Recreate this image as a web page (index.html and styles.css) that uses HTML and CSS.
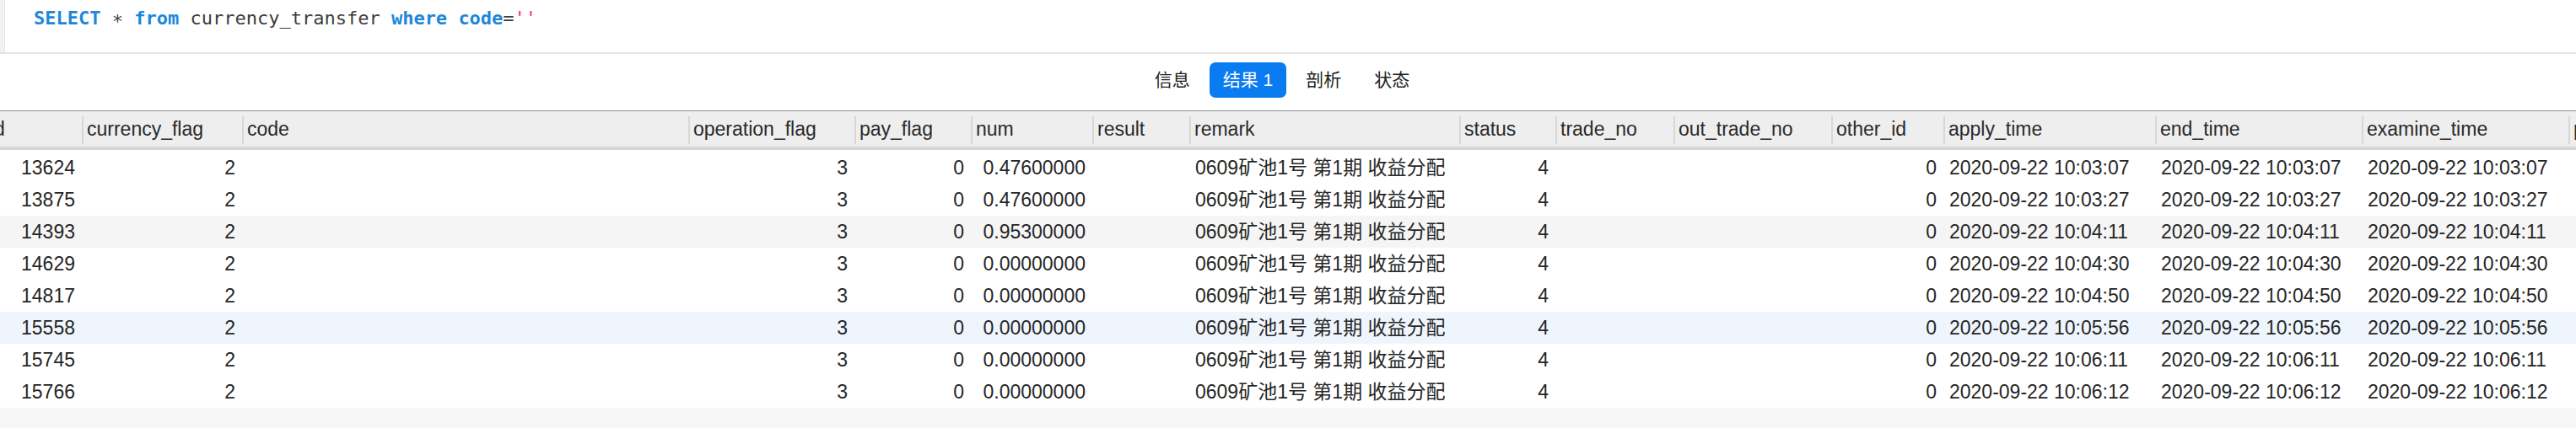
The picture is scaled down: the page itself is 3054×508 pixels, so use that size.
FILE: index.html
```html
<!DOCTYPE html>
<html lang="zh">
<head>
<meta charset="utf-8">
<title>currency_transfer</title>
<link rel="stylesheet" href="styles.css">
</head>
<body>
<div class="editor">
  <div class="gutter"></div>
  <pre class="sql"><span class="kw">SELECT</span> <span class="op">*</span> <span class="kw">from</span> currency_transfer <span class="kw">where</span> <span class="kw">code</span>=<span class="str">''</span></pre>
</div>
<nav class="tabs">
  <span class="tab">信息</span>
  <span class="tab active">结果 1</span>
  <span class="tab">剖析</span>
  <span class="tab">状态</span>
</nav>
<div class="table">
  <div class="thead">
    <div class="th first">id</div>
    <div class="th">currency_flag</div>
    <div class="th">code</div>
    <div class="th">operation_flag</div>
    <div class="th">pay_flag</div>
    <div class="th">num</div>
    <div class="th">result</div>
    <div class="th">remark</div>
    <div class="th">status</div>
    <div class="th">trade_no</div>
    <div class="th">out_trade_no</div>
    <div class="th">other_id</div>
    <div class="th">apply_time</div>
    <div class="th">end_time</div>
    <div class="th">examine_time</div>
    <div class="th">pay_time</div>
  </div>
  <div class="tbody">
    <div class="tr">
      <div class="td r">13624</div><div class="td r">2</div><div class="td"></div><div class="td r">3</div><div class="td r">0</div><div class="td r">0.47600000</div><div class="td"></div><div class="td">0609矿池1号 第1期 收益分配</div><div class="td r">4</div><div class="td"></div><div class="td"></div><div class="td r">0</div><div class="td">2020-09-22 10:03:07</div><div class="td">2020-09-22 10:03:07</div><div class="td">2020-09-22 10:03:07</div><div class="td"></div>
    </div>
    <div class="tr">
      <div class="td r">13875</div><div class="td r">2</div><div class="td"></div><div class="td r">3</div><div class="td r">0</div><div class="td r">0.47600000</div><div class="td"></div><div class="td">0609矿池1号 第1期 收益分配</div><div class="td r">4</div><div class="td"></div><div class="td"></div><div class="td r">0</div><div class="td">2020-09-22 10:03:27</div><div class="td">2020-09-22 10:03:27</div><div class="td">2020-09-22 10:03:27</div><div class="td"></div>
    </div>
    <div class="tr alt">
      <div class="td r">14393</div><div class="td r">2</div><div class="td"></div><div class="td r">3</div><div class="td r">0</div><div class="td r">0.95300000</div><div class="td"></div><div class="td">0609矿池1号 第1期 收益分配</div><div class="td r">4</div><div class="td"></div><div class="td"></div><div class="td r">0</div><div class="td">2020-09-22 10:04:11</div><div class="td">2020-09-22 10:04:11</div><div class="td">2020-09-22 10:04:11</div><div class="td"></div>
    </div>
    <div class="tr">
      <div class="td r">14629</div><div class="td r">2</div><div class="td"></div><div class="td r">3</div><div class="td r">0</div><div class="td r">0.00000000</div><div class="td"></div><div class="td">0609矿池1号 第1期 收益分配</div><div class="td r">4</div><div class="td"></div><div class="td"></div><div class="td r">0</div><div class="td">2020-09-22 10:04:30</div><div class="td">2020-09-22 10:04:30</div><div class="td">2020-09-22 10:04:30</div><div class="td"></div>
    </div>
    <div class="tr">
      <div class="td r">14817</div><div class="td r">2</div><div class="td"></div><div class="td r">3</div><div class="td r">0</div><div class="td r">0.00000000</div><div class="td"></div><div class="td">0609矿池1号 第1期 收益分配</div><div class="td r">4</div><div class="td"></div><div class="td"></div><div class="td r">0</div><div class="td">2020-09-22 10:04:50</div><div class="td">2020-09-22 10:04:50</div><div class="td">2020-09-22 10:04:50</div><div class="td"></div>
    </div>
    <div class="tr sel">
      <div class="td r">15558</div><div class="td r">2</div><div class="td"></div><div class="td r">3</div><div class="td r">0</div><div class="td r">0.00000000</div><div class="td"></div><div class="td">0609矿池1号 第1期 收益分配</div><div class="td r">4</div><div class="td"></div><div class="td"></div><div class="td r">0</div><div class="td">2020-09-22 10:05:56</div><div class="td">2020-09-22 10:05:56</div><div class="td">2020-09-22 10:05:56</div><div class="td"></div>
    </div>
    <div class="tr">
      <div class="td r">15745</div><div class="td r">2</div><div class="td"></div><div class="td r">3</div><div class="td r">0</div><div class="td r">0.00000000</div><div class="td"></div><div class="td">0609矿池1号 第1期 收益分配</div><div class="td r">4</div><div class="td"></div><div class="td"></div><div class="td r">0</div><div class="td">2020-09-22 10:06:11</div><div class="td">2020-09-22 10:06:11</div><div class="td">2020-09-22 10:06:11</div><div class="td"></div>
    </div>
    <div class="tr">
      <div class="td r">15766</div><div class="td r">2</div><div class="td"></div><div class="td r">3</div><div class="td r">0</div><div class="td r">0.00000000</div><div class="td"></div><div class="td">0609矿池1号 第1期 收益分配</div><div class="td r">4</div><div class="td"></div><div class="td"></div><div class="td r">0</div><div class="td">2020-09-22 10:06:12</div><div class="td">2020-09-22 10:06:12</div><div class="td">2020-09-22 10:06:12</div><div class="td"></div>
    </div>
  </div>
</div>
</body>
</html>
```

FILE: styles.css
```css
html, body {
  margin: 0;
  padding: 0;
}

body {
  width: 3054px;
  height: 508px;
  overflow: hidden;
  background: #f6f6f6;
  font-family: "Liberation Sans", "Noto Sans CJK SC", sans-serif;
  color: #262626;
}

/* SQL editor */
.editor {
  display: flex;
  height: 62px;
  background: #ffffff;
  border-bottom: 2px solid #e4e4e4;
}

.gutter {
  width: 5px;
  background: #f2f2f2;
  border-right: 1px solid #e6e6e6;
}

.sql {
  margin: 0;
  padding: 7px 0 0 34px;
  font-family: "DejaVu Sans Mono", "Liberation Mono", monospace;
  font-size: 22px;
  line-height: 30px;
  color: #3d3d3d;
}

.sql .kw {
  color: #1d87d9;
  font-weight: bold;
}

.sql .op {
  vertical-align: -0.2em;
  line-height: 0;
}

.sql .str {
  color: #e5385c;
}

/* Result tabs */
.tabs {
  display: flex;
  justify-content: center;
  gap: 7px;
  padding: 10px 14px 15px 0;
  background: #ffffff;
}

.tab {
  height: 42px;
  line-height: 42px;
  padding: 0 16px;
  border-radius: 7px;
  font-family: "Liberation Sans", "Noto Sans CJK SC", sans-serif;
  font-size: 21px;
  color: #222222;
}

.tab.active {
  background: #0b7bf2;
  color: #ffffff;
}

/* Result grid */
.table {
  --cols: 115px 190px 529px 197px 138px 144px 115px 320px 114px 140px 187px 133px 251px 245px 245px 200px;
  margin-left: -18px;
}

.thead {
  display: grid;
  grid-template-columns: var(--cols);
  height: 42px;
  background: #eeeeee;
  border-top: 1px solid #8e8e8e;
  border-bottom: 4px solid #d6d6d6;
}

.th {
  position: relative;
  padding-left: 6px;
  line-height: 42px;
  font-size: 23px;
  color: #2a2a2a;
  white-space: nowrap;
  overflow: hidden;
}

.th::before {
  content: "";
  position: absolute;
  left: 0;
  top: 6px;
  bottom: 3px;
  width: 2px;
  background: #d7d7d7;
}

.th.first::before {
  display: none;
}

.tbody {
  padding-top: 2px;
  background: #ffffff;
}

.tr {
  display: grid;
  grid-template-columns: var(--cols);
  height: 38px;
  line-height: 38px;
  font-size: 23px;
  background: #ffffff;
}

.tr.alt {
  background: #f5f5f5;
}

.tr.sel {
  background: #eff5fd;
}

.td {
  padding: 0 7px;
  white-space: nowrap;
  overflow: hidden;
}

.td.r {
  padding-right: 8px;
  text-align: right;
}
```
